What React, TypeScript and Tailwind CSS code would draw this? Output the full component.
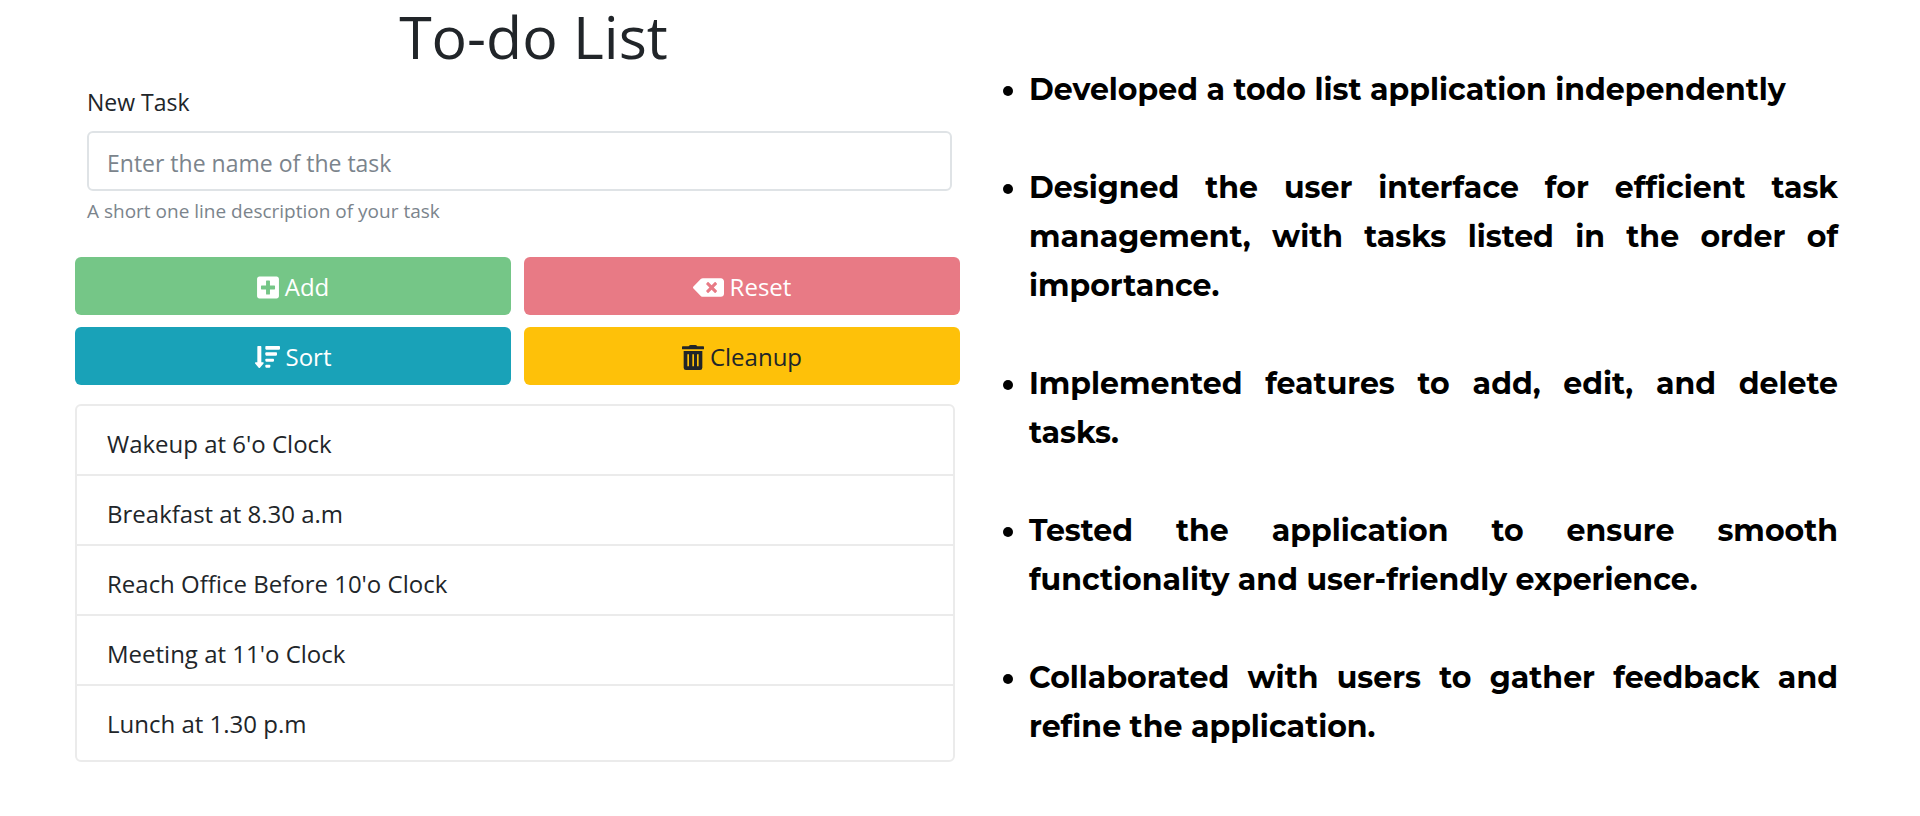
import { FaBackspace, FaPlusSquare } from "react-icons/fa";

const tasks = [
  "Wakeup at 6'o Clock",
  "Breakfast at 8.30 a.m",
  "Reach Office Before 10'o Clock",
  "Meeting at 11'o Clock",
  "Lunch at 1.30 p.m",
];

const highlights = [
  "Developed a todo list application independently",
  "Designed the user interface for efficient task management, with tasks listed in the order of importance.",
  "Implemented features to add, edit, and delete tasks.",
  "Tested the application to ensure smooth functionality and user-friendly experience.",
  "Collaborated with users to gather feedback and refine the application.",
];

function SortIcon() {
  return (
    <svg viewBox="0 0 75 66" className="h-[22px] w-[25px]" fill="currentColor" aria-hidden="true">
      <path d="M9 0h8q2 0 2 2v47h5q4 1 1 4L15 65q-2 2-4 0L1 53q-3-3 1-4h5V2q0-2 2-2Z" />
      <rect x="31" y="0" width="44" height="11" rx="2.5" />
      <rect x="31" y="19" width="35" height="10" rx="2.5" />
      <rect x="31" y="38" width="26" height="9" rx="2.5" />
      <rect x="31" y="56" width="15" height="9" rx="2.5" />
    </svg>
  );
}

function TrashIcon() {
  return (
    <svg viewBox="0 0 66 75" className="h-[25px] w-[22px]" fill="currentColor" aria-hidden="true">
      <path d="M2 4h18l3-3q1-1 3-1h14q2 0 3 1l3 3h18q2 0 2 2v5q0 2-2 2H2q-2 0-2-2V6q0-2 2-2Z" />
      <path
        fillRule="evenodd"
        d="M5 18h56v50q0 7-7 7H12q-7 0-7-7ZM16 28v36h5V28ZM31 28v36h5V28ZM45 28v36h5V28Z"
      />
    </svg>
  );
}

const buttonBase = "flex h-[58px] items-center justify-center gap-1.5 rounded-md pt-0.5 text-2xl";

export default function App() {
  return (
    <main className="grid grid-cols-2 bg-white text-[23px] text-[#212529] font-['Open_Sans','Noto_Sans',sans-serif]">
      <section className="pl-[75px]">
        <h1 className="h-[84px] pl-8 text-center text-[59px] leading-[72px]">To-do List</h1>
        <form className="pr-2" onSubmit={(e) => e.preventDefault()}>
          <div className="pl-3">
            <label htmlFor="task" className="block leading-9">New Task</label>
            <input
              id="task"
              type="text"
              aria-describedby="task-help"
              placeholder="Enter the name of the task"
              className="mt-[11px] block h-[60px] w-full rounded-md border-2 border-[#dfe3e6] bg-white px-[18px] pt-1 placeholder:text-[#7b848c]"
            />
            <p id="task-help" className="mt-1 text-[19px] leading-8 text-[#7b848c]">
              A short one line description of your task
            </p>
          </div>
        </form>
        <div className="mt-[30px] grid grid-cols-2 gap-x-[13px] gap-y-3">
          <button type="button" className={`${buttonBase} bg-[#75c687] text-white`}>
            <FaPlusSquare className="h-[25px] w-[22px]" />
            Add
          </button>
          <button type="button" className={`${buttonBase} bg-[#e87a85] text-white`}>
            <FaBackspace className="h-[25px] w-[31px]" />
            Reset
          </button>
          <button type="button" className={`${buttonBase} bg-[#19a2b8] text-white`}>
            <SortIcon />
            Sort
          </button>
          <button type="button" className={`${buttonBase} bg-[#fec109]`}>
            <TrashIcon />
            Cleanup
          </button>
        </div>
        <ul className="mr-[5px] mt-[19px] divide-y-2 divide-[#ebebeb] rounded-md border-2 border-[#ebebeb] pb-1.5">
          {tasks.map((task) => (
            <li key={task} className="px-[30px] pb-3.5 pt-[22px] text-2xl leading-8">{task}</li>
          ))}
        </ul>
      </section>
      <section className="pl-[69px] pr-[82px] pt-[65px]">
        <ul className="flex list-disc flex-col gap-[49px] text-justify text-[30px] font-bold leading-[49px] text-black font-['Montserrat','Inter',sans-serif]">
          {highlights.map((item) => (
            <li key={item}>{item}</li>
          ))}
        </ul>
      </section>
    </main>
  );
}
